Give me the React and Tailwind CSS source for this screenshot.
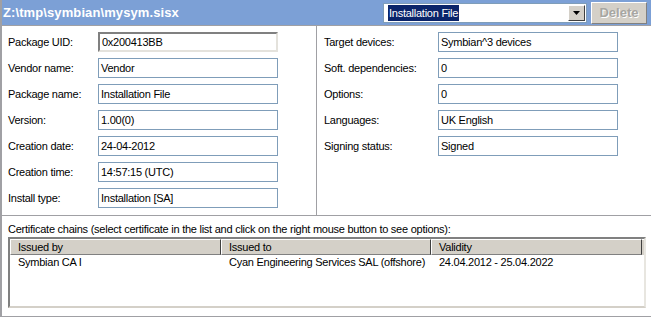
import React from 'react';

const leftRows = [
  ['Package UID:', '0x200413BB', true],
  ['Vendor name:', 'Vendor'],
  ['Package name:', 'Installation File'],
  ['Version:', '1.00(0)'],
  ['Creation date:', '24-04-2012'],
  ['Creation time:', '14:57:15 (UTC)'],
  ['Install type:', 'Installation [SA]'],
];

const rightRows = [
  ['Target devices:', 'Symbian^3 devices'],
  ['Soft. dependencies:', '0'],
  ['Options:', '0'],
  ['Languages:', 'UK English'],
  ['Signing status:', 'Signed'],
];

const Field = ({ value, sunken }) => (
  <div
    className={`w-[180px] h-[20px] flex items-center pl-[2px] bg-white ${
      sunken
        ? 'border-2 border-t-[#808080] border-l-[#808080] border-b-[#e4e2dc] border-r-[#e4e2dc]'
        : 'border border-[#7f9db9]'
    }`}
  >
    {value}
  </div>
);

const App = () => {
  return (
    <div
      className="w-[651px] h-[323px] bg-white text-black text-[11px] tracking-[-0.25px] overflow-hidden"
      style={{ fontFamily: '"Liberation Sans", Arial, sans-serif' }}
    >
      <div className="h-[317px] border-l-2 border-b border-[#a0a0a4] flex flex-col">
        {/* title bar */}
        <div className="h-[26px] shrink-0 bg-[#7ca0d6] border-b border-[#a0a0a4] flex items-center">
          <span className="pl-[1px] text-white font-bold text-[13px] tracking-[0.1px]">Z:\tmp\symbian\mysym.sisx</span>
          <div className="ml-auto flex items-center">
            <div className="w-[204px] h-[20px] bg-white border border-[#7f9db9] flex items-center pl-[4px] pr-[1px] mt-[1px]">
              <span className="bg-[#0a246a] text-white px-[1px] leading-[16px]">Installation File</span>
              <div className="ml-auto w-[17px] h-[16px] bg-[#d4d0c8] border border-t-white border-l-white border-b-[#404040] border-r-[#404040] flex items-center justify-center">
                <svg width="7" height="4" viewBox="0 0 7 4"><path d="M0 0h7L3.5 4z" fill="#000" /></svg>
              </div>
            </div>
            <div className="ml-[4px] mr-[4px] w-[56px] h-[22px] bg-[#d4d0c8] border border-t-white border-l-white border-b-[#808080] border-r-[#808080] flex items-center justify-center">
              <span className="font-bold text-[13px] tracking-normal text-[#a7a6a2] [text-shadow:1px_1px_0_#ffffff]">Delete</span>
            </div>
          </div>
        </div>

        {/* details */}
        <div className="h-[190px] shrink-0 flex border-b border-[#a0a0a4]">
          <div className="w-[315px] border-r border-[#a0a0a4] pt-[6px] pl-[6px] flex flex-col gap-[6px]">
            {leftRows.map(([label, value, sunken]) => (
              <div key={label} className="flex items-center h-[20px]">
                <span className="w-[90px]">{label}</span>
                <Field value={value} sunken={sunken} />
              </div>
            ))}
          </div>
          <div className="flex-1 pt-[6px] pl-[7px] flex flex-col gap-[6px]">
            {rightRows.map(([label, value]) => (
              <div key={label} className="flex items-center h-[20px]">
                <span className="w-[114px]">{label}</span>
                <Field value={value} />
              </div>
            ))}
          </div>
        </div>

        {/* certificates */}
        <div className="flex-1 pl-[6px] pt-[5px]">
          <div className="leading-[16px]">
            Certificate chains (select certificate in the list and click on the right mouse button to see options):
          </div>
          <div className="w-[638px] h-[71px] border-2 border-t-[#808080] border-l-[#808080] border-b-[#d4d0c8] border-r-[#e8e6e0] bg-white">
            <div className="flex h-[16px]">
              {['Issued by', 'Issued to', 'Validity'].map((h, i) => (
                <div
                  key={h}
                  className={`${i === 1 ? 'w-[210px]' : 'w-[211px]'} bg-[#d4d0c8] border border-t-white border-l-white border-b-[#808080] border-r-[#404040] flex items-center pl-[7px]`}
                >
                  {h}
                </div>
              ))}
              <div className="flex-1 bg-[#d4d0c8] border-t border-white" />
            </div>
            <div className="flex h-[15px] items-center">
              <span className="w-[211px] pl-[8px]">Symbian CA I</span>
              <span className="w-[210px] pl-[8px]">Cyan Engineering Services SAL (offshore)</span>
              <span className="pl-[8px]">24.04.2012 - 25.04.2022</span>
            </div>
          </div>
        </div>
      </div>
    </div>
  );
};

export default App;
